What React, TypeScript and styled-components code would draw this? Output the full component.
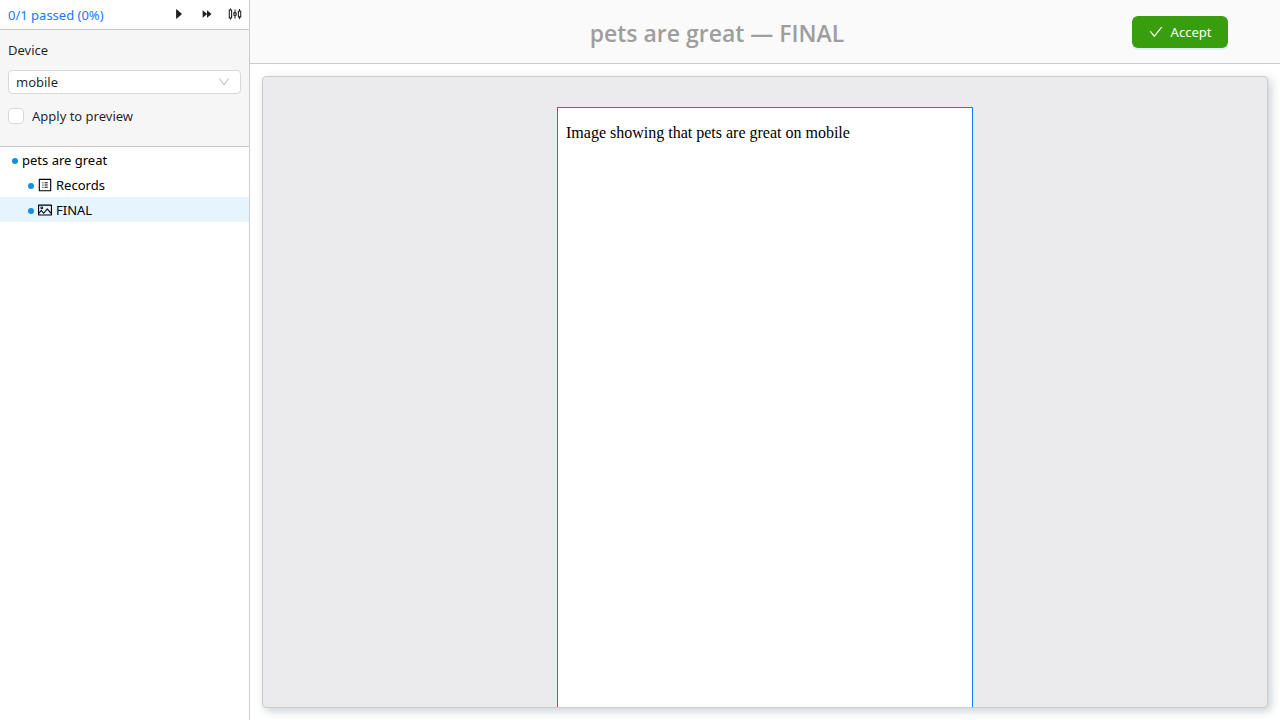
import React from "react";
import styled, { createGlobalStyle } from "styled-components";
import {
  AiOutlineCaretRight,
  AiOutlineForward,
  AiOutlineSliders,
  AiOutlineProfile,
  AiOutlinePicture,
  AiOutlineCheck,
  AiOutlineDown,
} from "react-icons/ai";

const TIGHT = "64 64 896 896";

const GlobalStyle = createGlobalStyle`
  *, *::before, *::after { box-sizing: border-box; }
  body {
    margin: 0;
    background: #fff;
    color: rgba(0, 0, 0, 0.88);
    font-family: "Noto Sans", "Open Sans", sans-serif;
    font-size: 13px;
    line-height: 22px;
  }
  button, select, input { font: inherit; color: inherit; }
`;

const Shell = styled.div`
  display: flex;
  height: 100vh;
  overflow: hidden;
`;

const Sidebar = styled.aside`
  flex: none;
  width: 250px;
  border-right: 1px solid #ccc;
`;

const StatusBar = styled.div`
  display: flex;
  align-items: center;
  justify-content: space-between;
  height: 30px;
  padding: 0 0 0 8px;
  border-bottom: 1px solid #ccc;
`;

const StatusLink = styled.a`
  color: #1677ff;
  text-decoration: none;
`;

const Actions = styled.div`
  display: flex;
`;

const IconButton = styled.button`
  display: flex;
  align-items: center;
  justify-content: center;
  width: 28px;
  height: 28px;
  padding: 0 0 2px;
  border: 0;
  background: transparent;
  cursor: pointer;
`;

const Settings = styled.section`
  display: flex;
  flex-direction: column;
  padding: 9px 8px 19px;
  background: #f6f6f6;
  border-bottom: 1px solid #ccc;
`;

const SelectWrap = styled.div`
  display: grid;
  align-items: center;
  margin: 9px 0 11px;

  & > * { grid-area: 1 / 1; }
  & > svg {
    justify-self: end;
    margin-right: 11px;
    color: rgba(0, 0, 0, 0.25);
    pointer-events: none;
  }
`;

const Select = styled.select`
  width: 100%;
  height: 24px;
  padding: 0 7px;
  line-height: 22px;
  appearance: none;
  background: #fff;
  border: 1px solid #d9d9d9;
  border-radius: 4px;
`;

const CheckLabel = styled.label`
  display: flex;
  align-items: center;
  gap: 8px;
`;

const Checkbox = styled.input`
  width: 16px;
  height: 16px;
  margin: 0;
  appearance: none;
  background: #fff;
  border: 1px solid #d9d9d9;
  border-radius: 4px;

  &:checked { background: #1677ff; border-color: #1677ff; }
`;

const Tree = styled.ul`
  margin: 0;
  padding: 0;
  list-style: none;
`;

const TreeRow = styled.button<{ $level: number; $selected?: boolean }>`
  display: flex;
  align-items: center;
  gap: 4px;
  width: 100%;
  height: 25px;
  padding: 0 8px 0 ${(p) => 12 + p.$level * 16}px;
  border: 0;
  background: ${(p) => (p.$selected ? "#e6f4ff" : "transparent")};
  color: #000;
  text-align: left;
  cursor: pointer;
`;

const Dot = styled.span`
  flex: none;
  width: 6px;
  height: 6px;
  margin-top: 2px;
  border-radius: 50%;
  background: #108ee9;
`;

const Main = styled.main`
  display: flex;
  flex: 1;
  flex-direction: column;
  min-width: 0;
`;

const Header = styled.header`
  display: flex;
  align-items: center;
  height: 64px;
  padding: 0 52px 0 12px;
  background: #fafafa;
  border-bottom: 1px solid #ccc;
`;

const Title = styled.h1`
  flex: 1;
  margin: 2px 0 0;
  padding-left: 40px;
  color: #9e9e9e;
  font-family: "Open Sans", "Noto Sans", sans-serif;
  font-size: 23px;
  font-weight: 600;
  line-height: 32px;
  text-align: center;
`;

const AcceptButton = styled.button`
  display: flex;
  align-items: center;
  justify-content: center;
  gap: 8px;
  min-width: 96px;
  height: 32px;
  padding: 0 15px;
  border: 0;
  border-radius: 6px;
  background: #389e0d;
  box-shadow: 0 2px 0 rgba(5, 145, 255, 0.1);
  color: #fff;
  cursor: pointer;
`;

const Canvas = styled.section`
  display: flex;
  flex: 1;
  justify-content: center;
  min-height: 0;
  margin: 12px;
  padding-top: 30px;
  overflow: hidden;
  background: #ebebed;
  border: 1px solid #ccc;
  border-radius: 4px;
  box-shadow: 3px 3px 10px rgba(40, 70, 90, 0.25);
`;

const Device = styled.article`
  width: 416px;
  padding: 16px 8px;
  background: #fff;
  border: 1px solid #1677ff;
  border-bottom: 0;
  color: #000;
  font-family: "Liberation Serif", serif;
  font-size: 16px;
  line-height: 18px;
`;

const Caption = styled.p`
  margin: 0;
`;

export default function App() {
  return (
    <>
      <GlobalStyle />
      <Shell>
        <Sidebar>
          <StatusBar>
            <StatusLink href="#results">0/1 passed (0%)</StatusLink>
            <Actions>
              <IconButton aria-label="Run">
                <AiOutlineCaretRight size={14} />
              </IconButton>
              <IconButton aria-label="Run all">
                <AiOutlineForward size={14} />
              </IconButton>
              <IconButton aria-label="Settings">
                <AiOutlineSliders size={14} viewBox={TIGHT} />
              </IconButton>
            </Actions>
          </StatusBar>
          <Settings>
            <label htmlFor="device">Device</label>
            <SelectWrap>
              <Select id="device" defaultValue="mobile">
                <option value="mobile">mobile</option>
                <option value="desktop">desktop</option>
              </Select>
              <AiOutlineDown size={12} viewBox={TIGHT} />
            </SelectWrap>
            <CheckLabel>
              <Checkbox type="checkbox" />
              Apply to preview
            </CheckLabel>
          </Settings>
          <Tree>
            <li>
              <TreeRow $level={0}>
                <Dot />
                pets are great
              </TreeRow>
              <Tree>
                <li>
                  <TreeRow $level={1}>
                    <Dot />
                    <AiOutlineProfile size={14} viewBox={TIGHT} />
                    Records
                  </TreeRow>
                </li>
                <li>
                  <TreeRow $level={1} $selected>
                    <Dot />
                    <AiOutlinePicture size={14} viewBox={TIGHT} />
                    FINAL
                  </TreeRow>
                </li>
              </Tree>
            </li>
          </Tree>
        </Sidebar>
        <Main>
          <Header>
            <Title>pets are great — FINAL</Title>
            <AcceptButton>
              <AiOutlineCheck size={14} viewBox={TIGHT} />
              Accept
            </AcceptButton>
          </Header>
          <Canvas>
            <Device>
              <Caption>Image showing that pets are great on mobile</Caption>
            </Device>
          </Canvas>
        </Main>
      </Shell>
    </>
  );
}
